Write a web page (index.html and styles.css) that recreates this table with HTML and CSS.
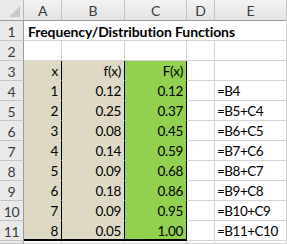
FILE: index.html
```html
<!DOCTYPE html>
<html>
<head>
<meta charset="utf-8">
<link rel="stylesheet" href="styles.css">
</head>
<body>
<div class="sheet">
  <div class="corner"><span class="tri"></span></div>
  <div class="ch">A</div><div class="ch">B</div><div class="ch">C</div><div class="ch">D</div><div class="ch">E</div><div class="ch end"></div>

  <div class="rh">1</div>
  <div class="c title">Frequency/Distribution Functions</div>
  <div class="c blank"></div><div class="c blank"></div><div class="c blank"></div><div class="c"></div><div class="c end"></div>

  <div class="rh">2</div>
  <div class="c"></div><div class="c"></div><div class="c"></div><div class="c"></div><div class="c"></div><div class="c end"></div>

  <div class="rh">3</div>
  <div class="c tan num bl">x</div><div class="c tan num bl">f(x)</div><div class="c grn num bl">F(x)</div><div class="c"></div><div class="c"></div><div class="c end"></div>

  <div class="rh">4</div>
  <div class="c tan num bl">1</div><div class="c tan num bl">0.12</div><div class="c grn num bl">0.12</div><div class="c"></div><div class="c txt">=B4</div><div class="c end"></div>

  <div class="rh">5</div>
  <div class="c tan num bl">2</div><div class="c tan num bl">0.25</div><div class="c grn num bl">0.37</div><div class="c"></div><div class="c txt">=B5+C4</div><div class="c end"></div>

  <div class="rh">6</div>
  <div class="c tan num bl">3</div><div class="c tan num bl">0.08</div><div class="c grn num bl">0.45</div><div class="c"></div><div class="c txt">=B6+C5</div><div class="c end"></div>

  <div class="rh">7</div>
  <div class="c tan num bl">4</div><div class="c tan num bl">0.14</div><div class="c grn num bl">0.59</div><div class="c"></div><div class="c txt">=B7+C6</div><div class="c end"></div>

  <div class="rh">8</div>
  <div class="c tan num bl">5</div><div class="c tan num bl">0.09</div><div class="c grn num bl">0.68</div><div class="c"></div><div class="c txt">=B8+C7</div><div class="c end"></div>

  <div class="rh">9</div>
  <div class="c tan num bl">6</div><div class="c tan num bl">0.18</div><div class="c grn num bl">0.86</div><div class="c"></div><div class="c txt">=B9+C8</div><div class="c end"></div>

  <div class="rh">10</div>
  <div class="c tan num bl">7</div><div class="c tan num bl">0.09</div><div class="c grn num bl">0.95</div><div class="c"></div><div class="c txt">=B10+C9</div><div class="c end"></div>

  <div class="rh">11</div>
  <div class="c tan num bl bb">8</div><div class="c tan num bl bb">0.05</div><div class="c grn num bl bb">1.00</div><div class="c"></div><div class="c txt">=B11+C10</div><div class="c end"></div>

  <div class="rh"></div>
  <div class="c"></div><div class="c"></div><div class="c"></div><div class="c"></div><div class="c"></div><div class="c end"></div>
</div>
</body>
</html>
```
FILE: styles.css
```css
* { box-sizing: border-box; }
html, body { margin: 0; padding: 0; background: #ffffff; }
body { font-family: Lato, "Open Sans", sans-serif; font-size: 13.5px; letter-spacing: -0.3px; color: #000; }

.sheet {
  display: grid;
  grid-template-columns: 24px 38px 63px 62px 28px 72px 1px;
  grid-template-rows: 21px repeat(11, 20px) 3px;
  width: 287px;
  height: 244px;
  overflow: hidden;
}

.corner {
  position: relative;
  background: #e9e9e9;
  border-right: 1px solid #b8b8b8;
  border-bottom: 1px solid #9a9a9a;
}
.tri {
  position: absolute;
  right: 3px;
  bottom: 3px;
  width: 0;
  height: 0;
  border-left: 11px solid transparent;
  border-bottom: 11px solid #c8c8c8;
}

.ch {
  background: linear-gradient(#f3f3f3, #e3e3e3);
  border-right: 1px solid #c4c4c4;
  border-bottom: 1px solid #9a9a9a;
  color: #3c3c3c;
  display: flex;
  align-items: center;
  justify-content: center;
  padding-top: 1px;
  font-size: 14px;
}
.ch.end { border-right: none; background: #ffffff; border-bottom: none; }

.rh {
  background: #e9e9e9;
  border-right: 1px solid #9a9a9a;
  border-bottom: 1px solid #c4c4c4;
  color: #3c3c3c;
  display: flex;
  align-items: center;
  justify-content: center;
  padding-top: 1px;
  font-size: 14px;
}

.c {
  border-right: 1px solid #d4d4d4;
  border-bottom: 1px solid #d4d4d4;
  display: flex;
  align-items: center;
  padding-top: 1px;
  white-space: nowrap;
  min-width: 0;
}
.c.end { border-right: none; }

.title {
  overflow: visible;
  font-weight: bold;
  font-size: 14px;
  letter-spacing: -0.1px;
  padding-left: 4px;
  border-right: none;
  position: relative;
  z-index: 1;
}
.blank { border-right: none; }

.tan { background: #ddd9c4; border-bottom-color: #ddd9c4; }
.grn { background: #92d050; border-bottom-color: #92d050; }
.num { justify-content: flex-end; padding-right: 3px; }
.txt { padding-left: 2px; letter-spacing: -0.5px; }
.bl { border-right: 1px solid #000; }
.bb { border-bottom: 2px solid #000; }
```
